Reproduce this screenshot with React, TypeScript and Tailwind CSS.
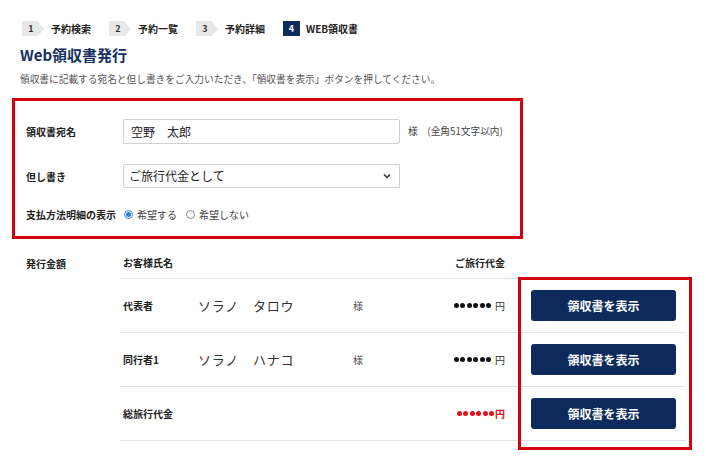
import React from "react";

const font = { fontFamily: '"Noto Sans CJK JP", "Noto Sans", sans-serif' };

function Step({ n, label, active }: { n: string; label: string; active?: boolean }) {
  return (
    <div className="flex items-center">
      {active ? (
        <div className="flex h-[15px] w-[17px] items-center justify-center bg-[#0d2c5c] text-[9px] font-bold text-white">{n}</div>
      ) : (
        <div className="flex items-center">
          <div className="flex h-[15px] w-[16px] items-center justify-center bg-[#e8e8e8] pl-[2px] text-[9px] font-bold text-[#333]">{n}</div>
          <div className="h-0 w-0 border-y-[7.5px] border-l-[6px] border-y-transparent border-l-[#e8e8e8]" />
        </div>
      )}
      <span className={`text-[10px] font-bold text-[#222] ${active ? "ml-[6px]" : "ml-[7px]"}`}>{label}</span>
    </div>
  );
}

function Dots({ red }: { red?: boolean }) {
  return (
    <span className="inline-flex items-center gap-[1.5px]">
      {[0, 1, 2, 3, 4, 5].map((i) => (
        <span key={i} className={`h-[5px] w-[5px] rounded-full ${red ? "bg-[#e0101c]" : "bg-[#111]"}`} />
      ))}
    </span>
  );
}

function Row({ label, name, total }: { label: string; name?: string; total?: boolean }) {
  return (
    <div className="flex h-[54px] items-center border-b border-[#e3e3e3]">
      <div className="w-[78px] pl-[3px] text-[10px] font-bold text-[#222]">{label}</div>
      <div className="w-[155px] text-[13px] tracking-[0.8px] text-[#333]">{name}</div>
      <div className="w-[57px] text-[10px] text-[#555]">{name ? "様" : ""}</div>
      <div className="flex w-[95px] items-center justify-end">
        {total ? (
          <>
            <Dots red />
            <span className="ml-[1px] text-[10px] font-bold text-[#e0101c]">円</span>
          </>
        ) : (
          <>
            <Dots />
            <span className="ml-[4px] text-[10px] text-[#333]">円</span>
          </>
        )}
      </div>
      <div className="ml-[26px]">
        <button className="flex h-[31px] w-[145px] items-center justify-center rounded-[3px] bg-[#0c2b5c] text-[12px] font-bold text-white">
          領収書を表示
        </button>
      </div>
    </div>
  );
}

export default function App() {
  return (
    <div className="relative h-[466px] w-[706px] overflow-hidden bg-white" style={font}>
      <div className="flex items-center gap-[18px] pl-[22px] pt-[21px]">
        <Step n="1" label="予約検索" />
        <Step n="2" label="予約一覧" />
        <Step n="3" label="予約詳細" />
        <Step n="4" label="WEB領収書" active />
      </div>
      <h1 className="mt-[8px] pl-[20px] text-[15px] font-bold leading-[22px] text-[#13305f]">Web領収書発行</h1>
      <p className="mt-[6px] pl-[20px] text-[9.7px] leading-[14px] text-[#555]">
        領収書に記載する宛名と但し書きをご入力いただき、「領収書を表示」ボタンを押してください。
      </p>

      <div className="ml-[12px] mt-[12px] h-[141px] w-[511px] border-[3px] border-[#d7000f] pl-[11px] pt-[18px]">
        <div className="flex items-center">
          <div className="w-[97px] text-[10px] font-bold text-[#222]">領収書宛名</div>
          <div className="flex h-[25px] w-[277px] items-center rounded-[2px] border border-[#cfcfcf] pl-[7px] text-[12px] text-[#222]">
            空野　太郎
          </div>
          <span className="ml-[8px] text-[9.7px] text-[#444]">様　(全角51文字以内)</span>
        </div>
        <div className="mt-[20px] flex items-center">
          <div className="w-[97px] text-[10px] font-bold text-[#222]">但し書き</div>
          <div className="flex h-[24px] w-[277px] items-center justify-between rounded-[2px] border border-[#cfcfcf] pl-[5px] pr-[8px] text-[12px] text-[#222]">
            <span>ご旅行代金として</span>
            <svg width="8" height="6" viewBox="0 0 8 6">
              <path d="M1 1.5 L4 4.5 L7 1.5" fill="none" stroke="#333" strokeWidth="1.5" />
            </svg>
          </div>
        </div>
        <div className="mt-[19px] flex items-center">
          <div className="w-[98px] text-[10px] font-bold text-[#222]">支払方法明細の表示</div>
          <div className="flex items-center text-[10px] text-[#444]">
            <span className="flex h-[9px] w-[9px] items-center justify-center rounded-full border border-[#3b82f6]">
              <span className="h-[5px] w-[5px] rounded-full bg-[#2f7de1]" />
            </span>
            <span className="ml-[4px]">希望する</span>
            <span className="ml-[9px] h-[9px] w-[9px] rounded-full border border-[#888]" />
            <span className="ml-[4px]">希望しない</span>
          </div>
        </div>
      </div>

      <div className="mt-[13px] flex">
        <div className="w-[120px] pl-[26px] pt-[4px] text-[10px] font-bold text-[#222]">発行金額</div>
        <div className="w-[565px]">
          <div className="flex h-[27px] items-center border-b border-[#e3e3e3] pb-[6px]">
            <div className="w-[290px] pl-[3px] text-[10px] font-bold text-[#222]">お客様氏名</div>
            <div className="w-[95px] text-right text-[10px] font-bold text-[#222]">ご旅行代金</div>
          </div>
          <Row label="代表者" name="ソラノ　タロウ" />
          <Row label="同行者1" name="ソラノ　ハナコ" />
          <Row label="総旅行代金" total />
        </div>
      </div>

      <div className="pointer-events-none absolute left-[518px] top-[277px] h-[173px] w-[174px] border-[3px] border-[#d7000f]" />
    </div>
  );
}
